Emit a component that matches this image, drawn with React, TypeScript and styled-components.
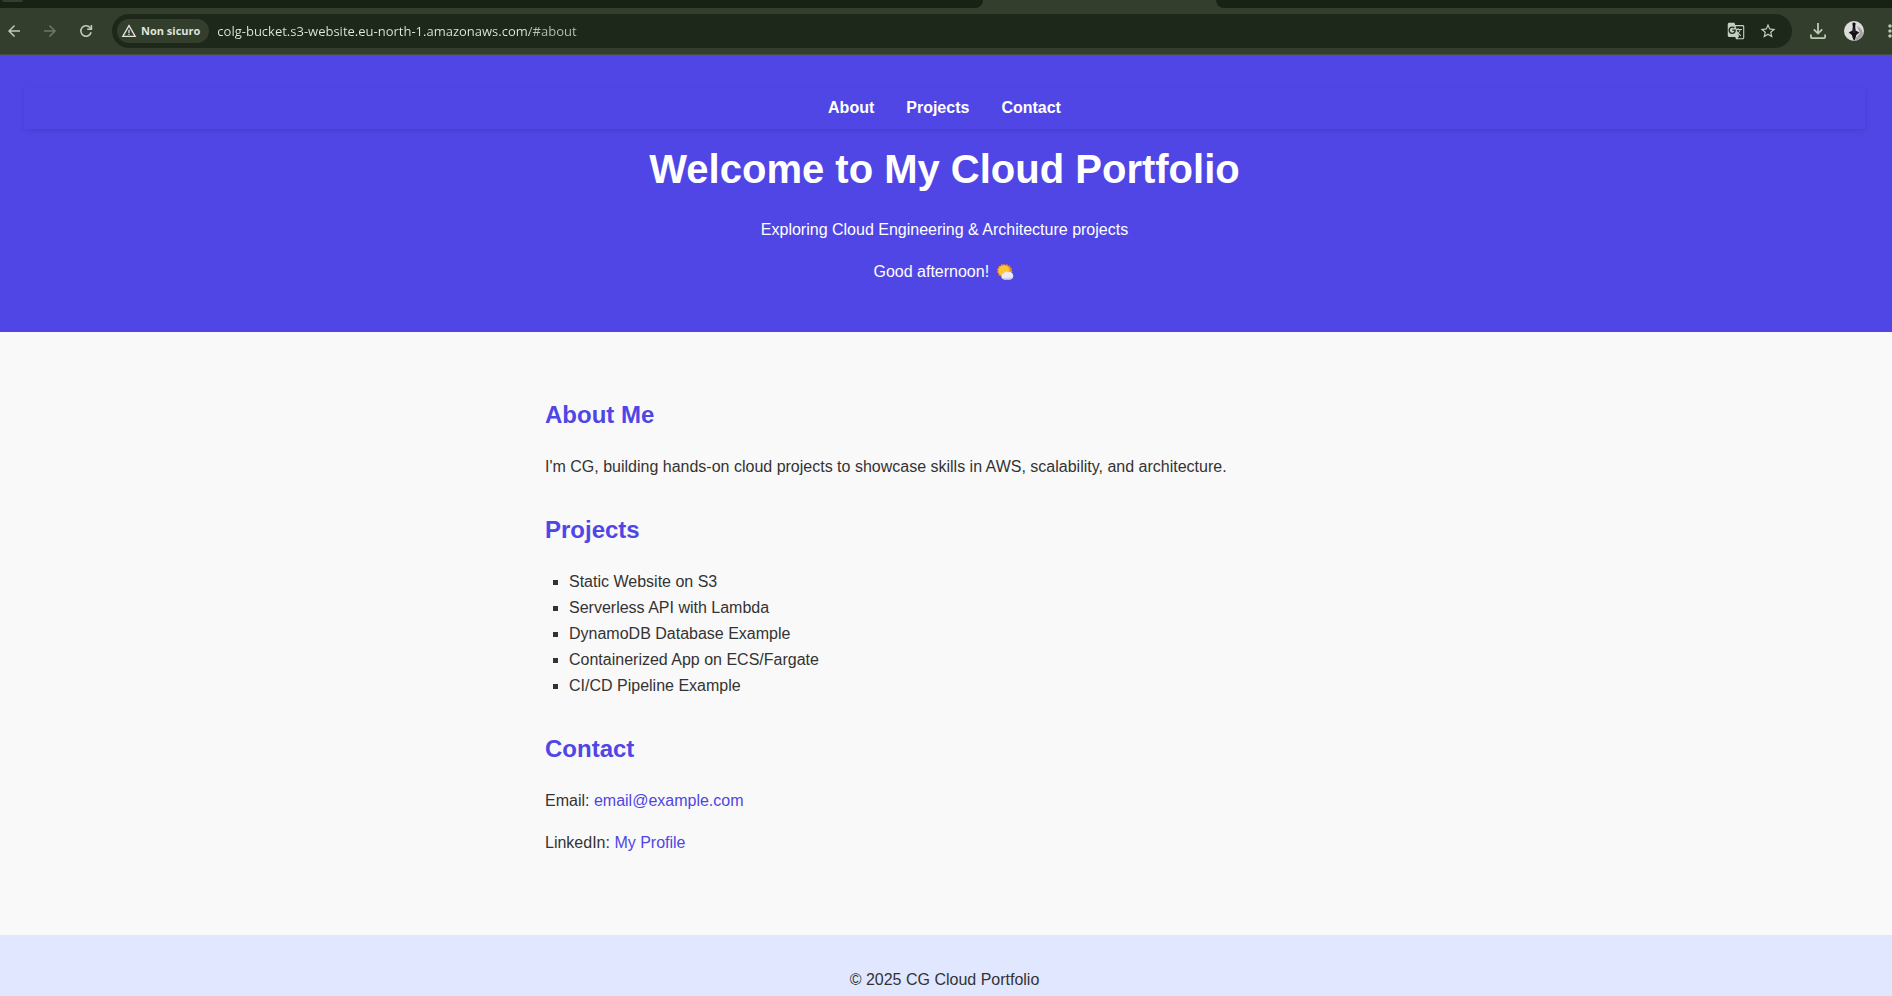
import React from "react";
import styled, { createGlobalStyle } from "styled-components";
import {
  MdArrowBack,
  MdArrowForward,
  MdGTranslate,
  MdMoreVert,
  MdStarBorder,
  MdWarningAmber,
} from "react-icons/md";

const GlobalStyle = createGlobalStyle`
  *, *::before, *::after { box-sizing: border-box; }
  body {
    margin: 0;
    background: #f9f9f9;
    color: #333;
    font-family: "Liberation Sans", Arial, sans-serif;
    font-size: 16px;
    line-height: 26px;
  }
`;

const Window = styled.div`
  display: flex;
  flex-direction: column;
  min-height: 100vh;
  overflow: hidden;
`;

/* Browser frame */

const TabStrip = styled.div`
  display: flex;
  height: 8px;
  background: #333e2d;
`;

const TabGroup = styled.div<{ $side: "left" | "right" }>`
  flex: ${(p) => (p.$side === "left" ? "983" : "675")} 1 0;
  padding-left: 2px;
  background: #182113;
  border-radius: ${(p) => (p.$side === "left" ? "0 0 12px 0" : "0 0 0 12px")};
`;

const TabSearch = styled.div`
  width: 21px;
  height: 2px;
  background: #333e2d;
  border-radius: 0 0 8px 8px;
`;

const ActiveTab = styled.div`
  flex: 234 1 0;
`;

const Toolbar = styled.div`
  display: flex;
  align-items: center;
  gap: 12px;
  height: 47px;
  margin-right: -12px;
  background: #333e2d;
  border-bottom: 1px solid #454d41;
`;

const ButtonGroup = styled.div<{ $gap?: number }>`
  display: flex;
  gap: ${(p) => p.$gap ?? 8}px;
`;

const IconButton = styled.button<{ $tone?: string }>`
  display: flex;
  align-items: center;
  justify-content: center;
  width: 28px;
  height: 28px;
  padding: 0;
  border: 0;
  border-radius: 14px;
  background: transparent;
  color: ${(p) => p.$tone ?? "#b9ceb1"};
`;

const AddressBar = styled.div`
  display: flex;
  flex: 1;
  align-items: center;
  height: 34px;
  padding: 0 10px 0 5px;
  background: #1e281a;
  border-radius: 17px;
`;

const SecurityChip = styled.button`
  display: flex;
  align-items: center;
  gap: 4px;
  height: 24px;
  padding: 0 9px 0 4px;
  border: 0;
  border-radius: 12px;
  background: #333e2d;
  color: #dfe4dc;
  font: 700 11px/24px "Open Sans", "Noto Sans", sans-serif;
  white-space: nowrap;
`;

/* The host is bright, the path after it is dimmer. */
const AddressInput = styled.input`
  flex: 1;
  min-width: 0;
  height: 28px;
  margin-left: 8px;
  padding: 0;
  border: 0;
  outline: 0;
  color: #dfe5dc;
  background: linear-gradient(90deg, #e3e8e0 313px, #b9c1b5 313px);
  background-clip: text;
  -webkit-background-clip: text;
  -webkit-text-fill-color: transparent;
  font: 400 13px/28px "Open Sans", "Noto Sans", sans-serif;
`;

/* Portfolio page */

const Header = styled.header`
  padding: 32px 27px 47px 24px;
  background: #4f46e5;
  color: #fff;
  text-align: center;
`;

const Nav = styled.nav`
  display: flex;
  justify-content: center;
  gap: 32px;
  padding: 8px;
  box-shadow: 0 2px 5px rgba(0, 0, 0, 0.1);
`;

const NavLink = styled.a`
  color: #fff;
  font-weight: 700;
  text-decoration: none;
`;

const Title = styled.h1`
  margin: 8px 0 16px;
  font-size: 40px;
  line-height: 64px;
`;

const Text = styled.p`
  margin: 0;

  & + & {
    margin-top: 16px;
  }
`;

const Main = styled.main`
  padding: 64px 26px 79px 24px;
`;

const Column = styled.div`
  display: flex;
  flex-direction: column;
  gap: 31px;
  max-width: 800px;
  margin: 0 auto;
`;

const Heading = styled.h2`
  margin: 0 0 20px;
  color: #4f46e5;
  font-size: 24px;
  line-height: 38px;
`;

const ProjectList = styled.ul`
  margin: 0;
  padding-left: 24px;
  list-style: square;
`;

const TextLink = styled.a`
  color: #4f46e5;
  text-decoration: none;
`;

const Footer = styled.footer`
  flex: 1;
  padding: 32px 27px 0 24px;
  background: #e0e7ff;
  text-align: center;
`;

const Emoji = styled.svg`
  width: 18px;
  height: 18px;
  margin: 0 2px;
  vertical-align: -4px;
`;

const projects = [
  "Static Website on S3",
  "Serverless API with Lambda",
  "DynamoDB Database Example",
  "Containerized App on ECS/Fargate",
  "CI/CD Pipeline Example",
];

const ReloadIcon = () => (
  <svg width="14" height="14" viewBox="0 0 14 14" fill="none" stroke="currentColor" strokeWidth="1.6">
    <path d="M12.1 8.2A5.2 5.2 0 1 1 11 3.6L12.3 5" />
    <path d="M12.4 1v4.2H8.2" />
  </svg>
);

const DownloadIcon = () => (
  <svg width="16" height="16" viewBox="0 0 16 16" fill="none" stroke="currentColor" strokeWidth="1.8">
    <path d="M8 0v10.4M3.8 6.4 8 10.6l4.2-4.2" />
    <path d="M.9 11.4v2.7q0 1 1 1h12.2q1 0 1-1v-2.7" />
  </svg>
);

const Avatar = () => (
  <svg width="20" height="20" viewBox="0 0 20 20">
    <circle cx="10" cy="10" r="10" fill="#dcdcdc" />
    <path d="M13 5a10 10 0 0 1 6 9 10 10 0 0 1-7 5.5L11 18l5-6z" fill="#a3a3a3" />
    <path d="M8.4 2.2q1.6-1.6 3.2 0l-.4 4 .4 3.2 3.7 2-3 2.6-.9 3.3L10.2 20l-1.4-2.7-.9-3.3-3.2-2.6L8.4 9.4l.4-3.4z" fill="#111" />
    <path d="m9 7 .5 5M11.2 8l-.5 4" stroke="#4a4a4a" strokeWidth=".5" />
  </svg>
);

const SunBehindCloud = () => (
  <Emoji viewBox="0 0 18 18" role="img" aria-label="Sun behind cloud">
    <path
      d="m8 .8 1.4 1.5L11.2 1l.9 1.9 2-.3.1 2.1 2 .6-.9 1.8 1.4 1.5-1.8 1.1.4 2-2 .3-.6 2-2-.6L9 14.8l-1.7-1.2-2 .8-.9-1.9-2-.1.2-2.1-1.8-1 1.1-1.8L.8 5.9l1.9-.9L2.5 3l2.1-.1.8-1.9 1.8.9z"
      fill="#f08b24"
    />
    <circle cx="8" cy="7.8" r="5.6" fill="#fcc535" />
    <path
      d="M8.3 16.5a3.2 3.2 0 0 1-.6-6.2 3.3 3.3 0 0 1 4.7-1.1 3.3 3.3 0 0 1 4.7 2.9 3.7 3.7 0 0 1-3 4.4z"
      fill="#eceaf5"
    />
    <path d="M8.3 16.5q-2.4-.2-3-2.2 4 1.6 11.5-.6-.9 2.4-2.7 2.8z" fill="#d3cfe4" />
  </Emoji>
);

export default function App() {
  return (
    <Window>
      <GlobalStyle />
      <TabStrip>
        <TabGroup $side="left">
          <TabSearch />
        </TabGroup>
        <ActiveTab />
        <TabGroup $side="right" />
      </TabStrip>
      <Toolbar>
        <ButtonGroup>
          <IconButton aria-label="Back">
            <MdArrowBack size={18} />
          </IconButton>
          <IconButton aria-label="Forward" $tone="#6d7a67">
            <MdArrowForward size={18} />
          </IconButton>
          <IconButton aria-label="Reload">
            <ReloadIcon />
          </IconButton>
        </ButtonGroup>
        <AddressBar>
          <SecurityChip>
            <MdWarningAmber size={16} />
            Non sicuro
          </SecurityChip>
          <AddressInput
            aria-label="Address"
            spellCheck={false}
            defaultValue="colg-bucket.s3-website.eu-north-1.amazonaws.com/#about"
          />
          <ButtonGroup $gap={4}>
            <IconButton aria-label="Translate" $tone="#c5ccc1">
              <MdGTranslate size={18} />
            </IconButton>
            <IconButton aria-label="Bookmark" $tone="#c5ccc1">
              <MdStarBorder size={18} />
            </IconButton>
          </ButtonGroup>
        </AddressBar>
        <ButtonGroup>
          <IconButton aria-label="Downloads">
            <DownloadIcon />
          </IconButton>
          <IconButton aria-label="Profile">
            <Avatar />
          </IconButton>
          <IconButton aria-label="Menu">
            <MdMoreVert size={20} />
          </IconButton>
        </ButtonGroup>
      </Toolbar>

      <Header>
        <Nav>
          <NavLink href="#about">About</NavLink>
          <NavLink href="#projects">Projects</NavLink>
          <NavLink href="#contact">Contact</NavLink>
        </Nav>
        <Title>Welcome to My Cloud Portfolio</Title>
        <Text>Exploring Cloud Engineering &amp; Architecture projects</Text>
        <Text>
          Good afternoon! <SunBehindCloud />
        </Text>
      </Header>

      <Main>
        <Column>
          <section id="about">
            <Heading>About Me</Heading>
            <Text>
              I'm CG, building hands-on cloud projects to showcase skills in AWS, scalability, and
              architecture.
            </Text>
          </section>
          <section id="projects">
            <Heading>Projects</Heading>
            <ProjectList>
              {projects.map((name) => (
                <li key={name}>{name}</li>
              ))}
            </ProjectList>
          </section>
          <section id="contact">
            <Heading>Contact</Heading>
            <Text>
              Email: <TextLink href="mailto:email@example.com">email@example.com</TextLink>
            </Text>
            <Text>
              LinkedIn: <TextLink href="#profile">My Profile</TextLink>
            </Text>
          </section>
        </Column>
      </Main>

      <Footer>
        <Text>© 2025 CG Cloud Portfolio</Text>
      </Footer>
    </Window>
  );
}
